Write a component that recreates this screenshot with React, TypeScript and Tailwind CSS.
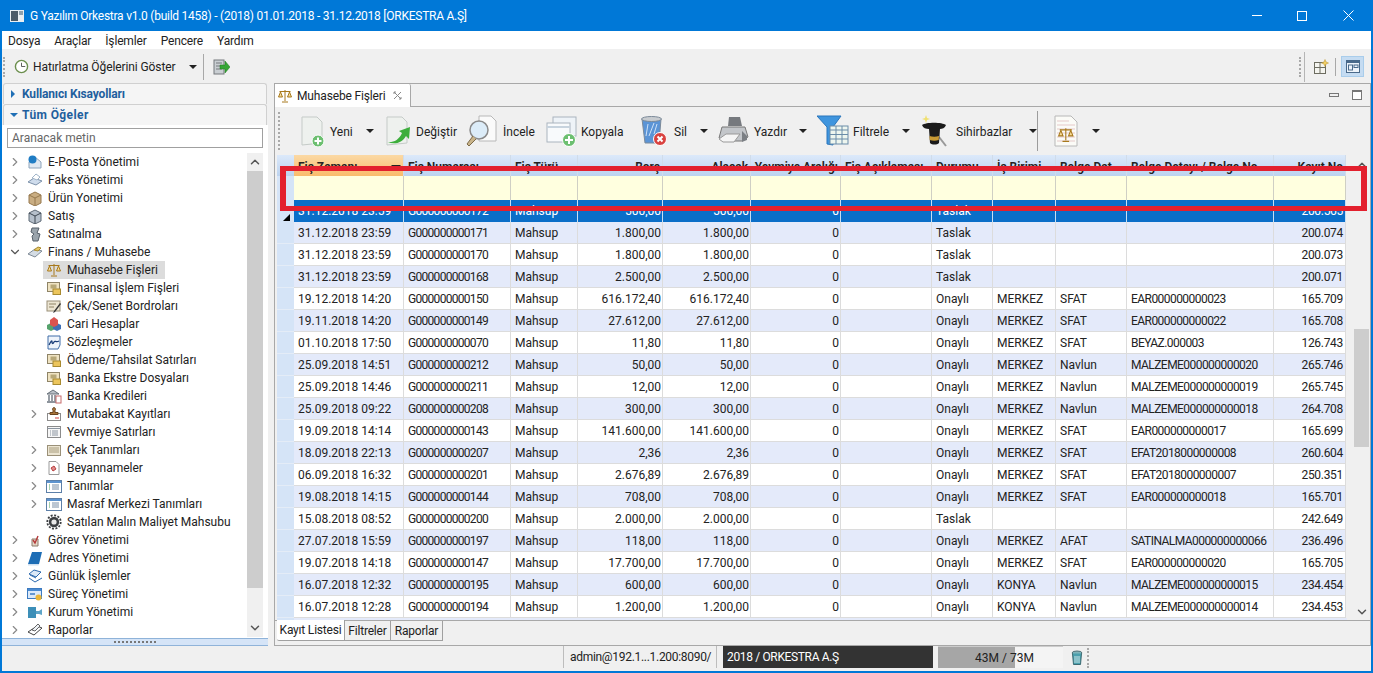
import { ChevronDown, ChevronRight, ChevronUp } from "lucide-react";

const COLS = "grid grid-cols-[110px_107px_67px_85px_88px_90px_91px_61px_63px_71px_147px_72px]";

const HEADERS: [string, boolean][] = [
  ["Fiş Zamanı", false],
  ["Fiş Numarası", false],
  ["Fiş Türü", false],
  ["Borç", true],
  ["Alacak", true],
  ["Yevmiye Aralığı", true],
  ["Fiş Açıklaması", false],
  ["Durumu", false],
  ["İş Birimi", false],
  ["Belge Dat", false],
  ["Belge Detayı / Belge No", false],
  ["Kayıt No", true],
];

const ROWS: string[][] = [
  ["31.12.2018 23:59", "G000000000171", "1.800,00", "Taslak", "", "", "", "200.074"],
  ["31.12.2018 23:59", "G000000000170", "1.800,00", "Taslak", "", "", "", "200.073"],
  ["31.12.2018 23:59", "G000000000168", "2.500,00", "Taslak", "", "", "", "200.071"],
  ["19.12.2018 14:20", "G000000000150", "616.172,40", "Onaylı", "MERKEZ", "SFAT", "EAR000000000023", "165.709"],
  ["19.11.2018 14:20", "G000000000149", "27.612,00", "Onaylı", "MERKEZ", "SFAT", "EAR000000000022", "165.708"],
  ["01.10.2018 17:50", "G000000000070", "11,80", "Onaylı", "MERKEZ", "SFAT", "BEYAZ.000003", "126.743"],
  ["25.09.2018 14:51", "G000000000212", "50,00", "Onaylı", "MERKEZ", "Navlun", "MALZEME000000000020", "265.746"],
  ["25.09.2018 14:46", "G000000000211", "12,00", "Onaylı", "MERKEZ", "Navlun", "MALZEME000000000019", "265.745"],
  ["25.09.2018 09:22", "G000000000208", "300,00", "Onaylı", "MERKEZ", "Navlun", "MALZEME000000000018", "264.708"],
  ["19.09.2018 14:14", "G000000000143", "141.600,00", "Onaylı", "MERKEZ", "SFAT", "EAR000000000017", "165.699"],
  ["18.09.2018 22:13", "G000000000207", "2,36", "Onaylı", "MERKEZ", "SFAT", "EFAT2018000000008", "260.604"],
  ["06.09.2018 16:32", "G000000000201", "2.676,89", "Onaylı", "MERKEZ", "SFAT", "EFAT2018000000007", "250.351"],
  ["19.08.2018 14:15", "G000000000144", "708,00", "Onaylı", "MERKEZ", "SFAT", "EAR000000000018", "165.701"],
  ["15.08.2018 08:52", "G000000000200", "2.000,00", "Taslak", "", "", "", "242.649"],
  ["27.07.2018 15:59", "G000000000197", "118,00", "Onaylı", "MERKEZ", "AFAT", "SATINALMA000000000066", "236.496"],
  ["19.07.2018 14:18", "G000000000147", "17.700,00", "Onaylı", "MERKEZ", "SFAT", "EAR000000000020", "165.705"],
  ["16.07.2018 12:32", "G000000000195", "600,00", "Onaylı", "KONYA", "Navlun", "MALZEME000000000015", "234.454"],
  ["16.07.2018 12:28", "G000000000194", "1.200,00", "Onaylı", "KONYA", "Navlun", "MALZEME000000000014", "234.453"],
];

type TreeItem = { label: string; icon: string; level: 0 | 1; arrow?: "right" | "down"; active?: boolean };

const TREE: TreeItem[] = [
  { label: "E-Posta Yönetimi", icon: "mail", level: 0, arrow: "right" },
  { label: "Faks Yönetimi", icon: "fax", level: 0, arrow: "right" },
  { label: "Ürün Yonetimi", icon: "box", level: 0, arrow: "right" },
  { label: "Satış", icon: "sale", level: 0, arrow: "right" },
  { label: "Satınalma", icon: "buy", level: 0, arrow: "right" },
  { label: "Finans / Muhasebe", icon: "finance", level: 0, arrow: "down" },
  { label: "Muhasebe Fişleri", icon: "scale", level: 1, active: true },
  { label: "Finansal İşlem Fişleri", icon: "money", level: 1 },
  { label: "Çek/Senet Bordroları", icon: "cheque", level: 1 },
  { label: "Cari Hesaplar", icon: "cubes", level: 1 },
  { label: "Sözleşmeler", icon: "contract", level: 1 },
  { label: "Ödeme/Tahsilat Satırları", icon: "money", level: 1 },
  { label: "Banka Ekstre Dosyaları", icon: "moneydoc", level: 1 },
  { label: "Banka Kredileri", icon: "bank", level: 1 },
  { label: "Mutabakat Kayıtları", icon: "stamp", level: 1, arrow: "right" },
  { label: "Yevmiye Satırları", icon: "lines", level: 1 },
  { label: "Çek Tanımları", icon: "chequedef", level: 1, arrow: "right" },
  { label: "Beyannameler", icon: "decl", level: 1, arrow: "right" },
  { label: "Tanımlar", icon: "table", level: 1, arrow: "right" },
  { label: "Masraf Merkezi Tanımları", icon: "table", level: 1, arrow: "right" },
  { label: "Satılan Malın Maliyet Mahsubu", icon: "gear", level: 1 },
  { label: "Görev Yönetimi", icon: "task", level: 0, arrow: "right" },
  { label: "Adres Yönetimi", icon: "book", level: 0, arrow: "right" },
  { label: "Günlük İşlemler", icon: "daily", level: 0, arrow: "right" },
  { label: "Süreç Yönetimi", icon: "process", level: 0, arrow: "right" },
  { label: "Kurum Yönetimi", icon: "org", level: 0, arrow: "right" },
  { label: "Raporlar", icon: "report", level: 0, arrow: "right" },
];

function ScaleGlyph() {
  return (
    <g fill="none" stroke="#a8791c" strokeWidth="1">
      <path d="M8 2v11M2.500 3.500h11M5 14h6" />
      <path d="M3.500 4L1.500 9h4zM12.500 4l-2 5h4z" fill="#f6dc98" />
    </g>
  );
}

function TreeIcon({ name }: { name: string }) {
  const body = () => {
    switch (name) {
      case "mail":
        return (
          <>
            <path d="M2 8l6-5 6 5v6H2z" fill="#dfe8f2" stroke="#8fa5bb" />
            <circle cx="5.500" cy="5.500" r="4" fill="#1f7cc4" />
          </>
        );
      case "fax":
        return (
          <>
            <path d="M1 10l6-4 8 3-6 4z" fill="#cfdcec" stroke="#7e93ab" />
            <path d="M5 6l4-4 4 3-3 3z" fill="#fff" stroke="#9fb3c8" />
          </>
        );
      case "box":
        return (
          <>
            <path d="M2 5l6-3 6 3v8l-6 3-6-3z" fill="#c9ad82" stroke="#96794f" />
            <path d="M8 8v8M2 5l6 3 6-3" fill="none" stroke="#96794f" />
          </>
        );
      case "sale":
        return (
          <>
            <path d="M2 5l6-3 6 3v8l-6 3-6-3z" fill="#b6c0cb" stroke="#5f6a76" />
            <path d="M8 8v8M2 5l6 3 6-3" fill="none" stroke="#3d4650" />
          </>
        );
      case "buy":
        return <path d="M5 2h7l-2 5 3 1-2 7H6l-1-5 2-2-3-2z" fill="#9aa4ac" stroke="#56606a" />;
      case "finance":
        return (
          <>
            <path d="M1 10l7-5 7 2-7 6z" fill="#d4dce4" stroke="#7e8a96" />
            <path d="M7 6l4-3 3 1-3 3z" fill="#e6c766" stroke="#a88a30" />
          </>
        );
      case "scale":
        return <ScaleGlyph />;
      case "money":
      case "moneydoc":
        return (
          <>
            <rect x="1.500" y="2.500" width="12" height="9" fill="#efe3c2" stroke="#8f8467" />
            <rect x="4.500" y="4.500" width="6" height="4" fill="#b7a878" />
            <rect x="7" y="9" width="7.500" height="5.500" fill="#ecc55c" stroke="#a88a30" />
          </>
        );
      case "cheque":
        return (
          <>
            <rect x="1" y="3" width="13" height="10" fill="#ece5d2" stroke="#9a9078" />
            <path d="M3 6h7M3 9h5" stroke="#8f8467" />
            <path d="M15 6l-6 8-2 1 1-2 6-8z" fill="#333" />
          </>
        );
      case "cubes":
        return (
          <>
            <path d="M1 9l4-2 4 2v4l-4 2-4-2z" fill="#56a36c" />
            <path d="M7 9l4-2 4 2v4l-4 2-4-2z" fill="#3d6fb6" />
            <path d="M4 4l4-3 4 3v5l-4 2-4-2z" fill="#d9534f" />
          </>
        );
      case "contract":
        return (
          <>
            <path d="M2 2h12v9l-2 4H2z" fill="#eef4fb" stroke="#3e6da8" />
            <path d="M3 11c2-4 3-5 3-3s1 2 2 0 2 1 5-1" fill="none" stroke="#1b3f7a" strokeWidth="1.300" />
          </>
        );
      case "bank":
        return (
          <>
            <path d="M1 6l6-4 6 4z" fill="#b9bfc6" stroke="#666f78" />
            <path d="M3 7v6M6 7v6M9 7v6" stroke="#6d7680" strokeWidth="1.400" />
            <rect x="1" y="13" width="11" height="2" fill="#8d949c" />
            <rect x="10" y="8" width="5" height="7" fill="#fff" stroke="#c56a6a" />
          </>
        );
      case "stamp":
        return (
          <>
            <rect x="1.500" y="7.500" width="13" height="7" fill="#fff" stroke="#8b8b8b" />
            <path d="M8 1.500a1.800 1.800 0 011 3v2h3v2H4v-2h3v-2a1.800 1.800 0 011-3z" fill="#a9753a" stroke="#6b4520" />
            <path d="M9 12h4" stroke="#d04040" />
          </>
        );
      case "lines":
        return (
          <>
            <rect x="1.500" y="2.500" width="13" height="11" fill="#f7f7f7" stroke="#8b8b8b" />
            <path d="M1.500 4.500h13M4 7h1M6 7h6M4 9h1M6 9h6M4 11h1M6 11h6" stroke="#8a94a0" />
          </>
        );
      case "chequedef":
        return (
          <>
            <rect x="1.500" y="3.500" width="13" height="10" fill="#ece5d2" stroke="#9a9078" />
            <path d="M3 6h10M3 8h10M3 10h10" stroke="#a89d7e" />
          </>
        );
      case "decl":
        return (
          <>
            <path d="M3 1.500h7l3 3v10H3z" fill="#fff" stroke="#9a9a9a" />
            <path d="M5 8l3-2 2 3-3 2z" fill="#e08b8b" stroke="#b83f3f" />
          </>
        );
      case "table":
        return (
          <>
            <rect x="0.500" y="2.500" width="15" height="12" fill="#fff" stroke="#5c7fa8" />
            <rect x="1" y="3" width="14" height="2" fill="#5d93cf" />
            <path d="M3 7h1M3 9h1M3 11h1" stroke="#4fa35a" />
            <path d="M6 7h7M6 9h7M6 11h7" stroke="#7b8ea6" />
          </>
        );
      case "gear":
        return (
          <>
            <circle cx="8" cy="8" r="5.200" fill="#3c3f42" />
            <circle cx="8" cy="8" r="6.700" fill="none" stroke="#3c3f42" strokeWidth="1.800" strokeDasharray="2 1.500" />
            <circle cx="8" cy="8" r="2.600" fill="#e9e9e9" />
          </>
        );
      case "task":
        return (
          <>
            <path d="M5 7h6v7H5z" fill="#e5d7c8" stroke="#8a7a6a" />
            <path d="M6 8l2 3 3-7" fill="none" stroke="#b5393a" strokeWidth="1.400" />
          </>
        );
      case "book":
        return (
          <>
            <path d="M5 2h10l-3 12H1z" fill="#1d6db5" />
            <path d="M1 14h11l-.5 1.500H1z" fill="#cfe0f0" />
          </>
        );
      case "daily":
        return (
          <>
            <path d="M2 6l5-4 7 2-5 5z" fill="#dbe8f6" stroke="#2c69ad" />
            <path d="M2 10l6 4 7-4M3 7l6 3" fill="none" stroke="#2c69ad" />
          </>
        );
      case "process":
        return (
          <>
            <rect x="0.500" y="2.500" width="14" height="10" fill="#dbe9f9" stroke="#3c7ac0" />
            <rect x="1" y="3" width="13" height="2" fill="#4a8ad0" />
            <path d="M3 8h5" stroke="#3c7ac0" strokeWidth="1.500" />
            <circle cx="11.500" cy="11.500" r="3" fill="#eab638" />
          </>
        );
      case "org":
        return (
          <>
            <rect x="1" y="3" width="8" height="11" fill="#3d8fb8" />
            <path d="M9 7h3l3-2v6l-3-1H9z" fill="#5ea5c8" />
          </>
        );
      default:
        return (
          <>
            <path d="M1 10l9-6 5 2-8 7z" fill="#fff" stroke="#444" />
            <path d="M5 8l6-6 2 2-5 5z" fill="#eef2f6" stroke="#666" />
          </>
        );
    }
  };
  return (
    <svg viewBox="0 0 16 16" className="h-4 w-4 shrink-0">
      {body()}
    </svg>
  );
}

function TreeRow({ item }: { item: TreeItem }) {
  return (
    <div className={`flex h-[18px] items-center ${item.level === 0 ? "pl-[4px]" : "pl-[23px]"}`}>
      <span className="flex w-[18px] shrink-0 items-center justify-center text-[#8a8a8a]">
        {item.arrow === "right" && <ChevronRight size={14} strokeWidth={2} />}
        {item.arrow === "down" && <ChevronDown size={14} strokeWidth={2} className="text-[#555]" />}
      </span>
      <span className={`flex h-[18px] items-center pl-[3px] ${item.active ? "bg-[#dcdcdc] pr-[7px]" : ""}`}>
        <TreeIcon name={item.icon} />
        <span className="ml-[5px] whitespace-nowrap text-[#222]">{item.label}</span>
      </span>
    </div>
  );
}

function DocBase({ children }: { children: React.ReactNode }) {
  return (
    <svg viewBox="0 0 32 32" className="h-8 w-8 shrink-0">
      <path d="M6 2h15l5 5v21l-20 2z" fill="#eef1ee" stroke="#c5cbc8" />
      {children}
    </svg>
  );
}

function TbIcon({ name }: { name: string }) {
  switch (name) {
    case "new":
      return (
        <DocBase>
          <circle cx="22" cy="26" r="6" fill="#6cbf70" stroke="#fff" />
          <path d="M22 22.500v7M18.500 26h7" stroke="#fff" strokeWidth="2" />
        </DocBase>
      );
    case "edit":
      return (
        <DocBase>
          <path d="M6 27c6 1 12-2 15-9l-3-2 11-4-1 12-3-3c-4 7-11 9-19 6z" fill="#3cae3c" />
        </DocBase>
      );
    case "view":
      return (
        <svg viewBox="0 0 32 32" className="h-8 w-8 shrink-0">
          <path d="M13 1h12l5 5v20H13z" fill="#fafafa" stroke="#b8b8b8" />
          <circle cx="13" cy="15" r="9" fill="#dcecf8" stroke="#8a8a8a" strokeWidth="1.500" />
          <path d="M7 21L1 29l2 2 7-7" fill="#c9b48a" stroke="#7c6a48" />
        </svg>
      );
    case "copy":
      return (
        <svg viewBox="0 0 32 32" className="h-8 w-8 shrink-0">
          <rect x="8" y="2" width="23" height="19" fill="#eef3f8" stroke="#aab4be" />
          <rect x="2" y="8" width="23" height="19" fill="#f8fafc" stroke="#aab4be" />
          <path d="M2 12h23" stroke="#c7d3de" strokeWidth="2" />
          <circle cx="24" cy="25" r="6.500" fill="#6cbf70" stroke="#fff" />
          <path d="M24 21v8M20 25h8" stroke="#fff" strokeWidth="2" />
        </svg>
      );
    case "trash":
      return (
        <svg viewBox="0 0 32 32" className="h-8 w-8 shrink-0">
          <path d="M5 4h19l-2 24H8z" fill="#5b94d6" stroke="#7c8a99" />
          <ellipse cx="14.500" cy="4" rx="10" ry="2.500" fill="#c8ccd0" stroke="#7c8a99" />
          <path d="M11 9l-2 12M17 8l-5 13M20 9l-3 10" stroke="#cfe2f7" />
          <circle cx="23" cy="24" r="6.500" fill="#d9423f" stroke="#fff" />
          <path d="M20.500 21.500l5 5M25.500 21.500l-5 5" stroke="#fff" strokeWidth="2" />
        </svg>
      );
    case "print":
      return (
        <svg viewBox="0 0 32 32" className="h-8 w-8 shrink-0">
          <path d="M11 2h11l2 9H10z" fill="#76797e" />
          <path d="M4 12h23l3 10-6 4H8l-7-3z" fill="#c3c6ca" stroke="#777" />
          <path d="M1 24l7-5h14l-6 8H5z" fill="#f5f5f5" stroke="#999" />
          <path d="M24 16l5 5v4l-5 2z" fill="#7b7f84" />
        </svg>
      );
    case "funnel":
      return (
        <svg viewBox="0 0 32 32" className="h-8 w-8 shrink-0">
          <path d="M0 1h24l-8 11v18l-6-1V12z" fill="#3f95de" stroke="#2a76bc" />
          <rect x="13" y="11" width="18" height="18" fill="#eef6ef" stroke="#6a8ca8" />
          <path d="M13 15h18M13 19.500h18M13 24h18M19 11v18M25 11v18" stroke="#6a8ca8" />
        </svg>
      );
    case "hat":
      return (
        <svg viewBox="0 0 32 32" className="h-8 w-8 shrink-0">
          <path d="M20 22l7 9" stroke="#999" strokeWidth="2" />
          <path d="M3 10c4-3 20-3 24 0-1 3-4 4-6 4l-1 14c-2 2-7 2-9 0L10 14c-3 0-6-1-7-4z" fill="#1b1b1b" />
          <path d="M10.500 21c3 1 6.500 1 9.500 0l-.3 4c-3 1-6 1-9 0z" fill="#c89a34" />
          <path d="M7 0l1 3 3 1-3 1-1 3-1-3-3-1 3-1z" fill="#f0e070" />
        </svg>
      );
    default:
      return (
        <svg viewBox="0 0 32 32" className="h-8 w-8 shrink-0">
          <path d="M5 1h16l6 6v24H5z" fill="#fbfbf7" stroke="#b8b8b8" />
          <path d="M7 6h12M7 10h18M7 14h18M7 18h18M7 22h18M7 26h18" stroke="#e5c9c9" />
          <g transform="translate(7 11) scale(1.100)">
            <ScaleGlyph />
          </g>
        </svg>
      );
  }
}

function Caret({ className = "" }: { className?: string }) {
  return <span className={`h-0 w-0 border-x-[4px] border-t-[4px] border-x-transparent border-t-[#222] ${className}`} />;
}

function TbButton({ icon, label, caret, gap, caretGap, width }: { icon: string; label: string; caret?: boolean; gap: string; caretGap?: string; width: string }) {
  return (
    <div className={`flex shrink-0 items-center ${width}`}>
      <TbIcon name={icon} />
      <span className={`whitespace-nowrap pt-[2px] ${gap}`}>{label}</span>
      {caret && <Caret className={caretGap} />}
    </div>
  );
}

function Grip({ className = "" }: { className?: string }) {
  return <span className={`w-[2px] border-l-2 border-dotted border-[#a9a9a9] ${className}`} />;
}

function cellTracking(i: number) {
  if (i === 1) return "tracking-[-0.7px]";
  if (i === 10) return "tracking-[-0.55px]";
  if (i === 11) return "tracking-[-0.3px] pr-[2px]";
  return "";
}

export default function App() {
  return (
    <div className="flex h-[673px] w-[1373px] flex-col overflow-hidden border-x-2 border-b-2 border-[#0078d7] bg-[#f0f0f0] font-['Roboto',sans-serif] text-[12px] leading-none text-[#222]">
      {/* Title bar */}
      <div className="-mx-[2px] flex h-[31px] shrink-0 items-center bg-[#0078d7] pl-[10px] text-white">
        <svg viewBox="0 0 14 12" className="h-3 w-[14px]">
          <rect width="14" height="12" fill="#e9eef2" />
          <rect x="1" y="1" width="7" height="10" fill="#4a5a68" />
          <rect x="9" y="1" width="4" height="4" fill="#8fa0ad" />
        </svg>
        <span className="ml-[6px] text-[12px] tracking-[-0.25px]">
          G Yazılım Orkestra v1.0 (build 1458) - (2018) 01.01.2018 - 31.12.2018 [ORKESTRA A.Ş]
        </span>
        <div className="ml-auto flex items-center pr-[19px]">
          <span className="h-px w-[10px] bg-white" />
          <span className="ml-[35px] h-[10px] w-[10px] border border-white" />
          <svg viewBox="0 0 11 11" className="ml-[36px] h-[11px] w-[11px]" stroke="#fff" fill="none">
            <path d="M.5.500l10 10M10.500.500l-10 10" />
          </svg>
        </div>
      </div>

      {/* Menu */}
      <div className="flex h-[18px] shrink-0 items-center gap-[14px] bg-white pl-[6px] pt-[2px] tracking-[-0.15px]">
        {["Dosya", "Araçlar", "İşlemler", "Pencere", "Yardım"].map((m) => (
          <span key={m}>{m}</span>
        ))}
      </div>

      {/* Main toolbar */}
      <div className="flex h-[34px] shrink-0 items-center pl-[1px] pt-[1px]">
        <Grip className="h-[20px]" />
        <svg viewBox="0 0 16 16" className="ml-[9px] h-[15px] w-[15px]">
          <circle cx="8" cy="8" r="6.500" fill="#fff" stroke="#6c8f4e" strokeWidth="1.500" />
          <path d="M8 4v4h4" fill="none" stroke="#555" />
        </svg>
        <span className="ml-[4px] whitespace-nowrap tracking-[-0.1px]">Hatırlatma Öğelerini Göster</span>
        <Caret className="ml-[14px]" />
        <span className="ml-[6px] h-[26px] w-px bg-[#a8a8a8]" />
        <svg viewBox="0 0 18 18" className="ml-[8px] h-[18px] w-[18px]">
          <rect x="2" y="2" width="10" height="14" fill="#c9ced2" stroke="#75797d" />
          <path d="M4 5h6M4 8h6M4 11h6" stroke="#75797d" />
          <path d="M8 7h5V3l5 6-5 6v-4H8z" fill="#36a636" stroke="#1e7a1e" strokeWidth=".5" />
        </svg>
        <div className="ml-auto flex items-center pr-[7px]">
          <Grip className="h-[20px]" />
          <span className="ml-[3px] h-[30px] w-px bg-[#b5b5b5]" />
          <svg viewBox="0 0 16 16" className="ml-[8px] h-[16px] w-[16px]">
            <rect x="1.500" y="3.500" width="11" height="11" fill="#f4f4ef" stroke="#6c6c60" />
            <path d="M1.500 8.500h11M7 3.500v11" stroke="#6c6c60" />
            <path d="M12 .5l1 2.500 2.500 1-2.500 1-1 2.500-1-2.500-2.500-1 2.500-1z" fill="#f2cf62" stroke="#b68e28" strokeWidth=".5" />
          </svg>
          <span className="ml-[6px] h-[18px] w-px bg-[#a8a8a8]" />
          <span className="ml-[5px] flex h-[21px] w-[23px] items-center justify-center border border-[#a9cdeb] bg-[#c5dcf2]">
            <svg viewBox="0 0 14 13" className="h-[13px] w-[14px]">
              <rect x=".5" y=".5" width="13" height="12" fill="#eef4fa" stroke="#4a6a8a" />
              <rect x="1" y="1" width="12" height="2" fill="#4a6a8a" />
              <rect x="2.500" y="5" width="4" height="5" fill="none" stroke="#4a6a8a" />
              <rect x="8" y="5" width="4" height="2.500" fill="none" stroke="#4a6a8a" />
            </svg>
          </span>
        </div>
      </div>

      {/* Work area */}
      <div className="flex min-h-0 flex-1">
        {/* Left navigator */}
        <div className="flex w-[266px] shrink-0 flex-col">
          <div className="mx-[1px] flex h-[21px] shrink-0 items-center rounded-t-[3px] border border-b-0 border-[#d0d0d0] bg-[#f5f5f5] pl-[7px] font-bold text-[#1f5f9e]">
            <span className="h-0 w-0 border-y-[4px] border-l-[4px] border-y-transparent border-l-[#1f6fb5]" />
            <span className="ml-[7px] tracking-[-0.15px]">Kullanıcı Kısayolları</span>
          </div>
          <div className="mx-[1px] flex h-[21px] shrink-0 items-center rounded-t-[3px] border border-b-0 border-[#d0d0d0] bg-[#f5f5f5] pl-[6px] font-bold text-[#1f5f9e]">
            <span className="h-0 w-0 border-x-[4px] border-t-[4px] border-x-transparent border-t-[#1f6fb5]" />
            <span className="ml-[4px] tracking-[0.4px]">Tüm Öğeler</span>
          </div>
          <div className="flex min-h-0 flex-1 flex-col bg-white">
            <div className="mx-[5px] mt-[3px] flex h-[20px] shrink-0 items-center border border-[#a0a0a0] bg-white pl-[4px] text-[#666]">
              Aranacak metin
            </div>
            <div className="mt-[5px] flex min-h-0 flex-1 pr-[5px]">
              <div className="min-w-0 flex-1 overflow-hidden">
                {TREE.map((t) => (
                  <TreeRow key={t.label} item={t} />
                ))}
              </div>
              <div className="mb-[1px] flex w-[16px] shrink-0 flex-col items-center bg-[#f0f0f0]">
                <ChevronUp size={14} strokeWidth={2.500} className="mt-[2px] h-[14px] shrink-0 text-[#555]" />
                <div className="mt-[2px] h-[417px] w-full bg-[#cdcdcd]" />
                <ChevronDown size={14} strokeWidth={2.500} className="mt-auto mb-[2px] text-[#555]" />
              </div>
            </div>
          </div>
          <div className="flex h-[8px] shrink-0 items-center justify-center border-y border-[#8fb3d9] bg-[#d5e4f7]">
            <span className="w-[42px] border-t-2 border-dotted border-[#777]" />
          </div>
        </div>

        {/* Right panel */}
        <div className="ml-[6px] flex min-w-0 flex-1 flex-col">
          <div className="flex min-h-0 flex-1 flex-col border border-[#a8a8a8] bg-[#f0f0f0]">
            {/* Tab strip */}
            <div className="flex h-[23px] shrink-0 items-stretch border-b border-[#a8a8a8]">
              <div className="-mb-px flex w-[136px] items-center rounded-tr-[2px] border-r border-[#a8a8a8] bg-white pl-[2px]">
                <svg viewBox="0 0 16 16" className="h-4 w-4">
                  <ScaleGlyph />
                </svg>
                <span className="ml-[4px] tracking-[-0.15px]">Muhasebe Fişleri</span>
                <svg viewBox="0 0 9 9" className="ml-[8px] h-[9px] w-[9px]" fill="none" stroke="#8a8a8a">
                  <path d="M1 1l7 7M8 1L1 8M1 1h2M1 1v2M8 8H6M8 8V6" />
                </svg>
              </div>
              <div className="ml-auto flex items-center gap-[13px] pr-[8px]">
                <span className="h-[4px] w-[10px] border border-[#777]" />
                <span className="h-[10px] w-[10px] border border-t-2 border-[#777] bg-white" />
              </div>
            </div>

            {/* Action toolbar */}
            <div className="flex h-[48px] shrink-0 items-center pl-[3px]">
              <Grip className="h-[38px]" />
              <div className="ml-[16px] flex items-center">
                <TbButton icon="new" label="Yeni" caret gap="ml-[2px]" caretGap="ml-[13px]" width="w-[85px]" />
                <TbButton icon="edit" label="Değiştir" gap="ml-[3px]" width="w-[85px]" />
                <TbButton icon="view" label="İncele" gap="ml-[5px]" width="w-[79px]" />
                <TbButton icon="copy" label="Kopyala" gap="ml-[4px]" width="w-[92px]" />
                <TbButton icon="trash" label="Sil" caret gap="ml-[5px]" caretGap="ml-[13px]" width="w-[81px]" />
                <TbButton icon="print" label="Yazdır" caret gap="ml-[4px]" caretGap="ml-[12px]" width="w-[99px]" />
                <TbButton icon="funnel" label="Filtrele" caret gap="ml-[4px]" caretGap="ml-[13px]" width="w-[102px]" />
                <TbButton icon="hat" label="Sihirbazlar" caret gap="ml-[5px]" caretGap="ml-[17px]" width="w-[118px]" />
              </div>
              <span className="h-[40px] w-px bg-[#9c9c9c]" />
              <div className="ml-[12px] flex items-center">
                <TbIcon name="doc" />
                <Caret className="ml-[10px]" />
              </div>
            </div>

            {/* Table */}
            <div className="flex min-h-0 flex-1 pl-[2px] pr-px">
              <div className="min-w-0 flex-1 overflow-hidden">
                {/* Column headers */}
                <div className="flex h-[21px]">
                  <div className="w-[17px] shrink-0 bg-gradient-to-b from-[#dce9fa] to-[#bcd3ef]" />
                  <div className={`${COLS} flex-1`}>
                    {HEADERS.map(([h, right], i) => (
                      <div
                        key={h}
                        className={`flex items-center overflow-hidden whitespace-nowrap border-r border-[#d0dcea] pt-[3px] font-semibold ${right ? "justify-end pr-[2px]" : "pl-[4px]"} ${i === 0 ? "justify-between bg-gradient-to-b from-[#fbd9a4] to-[#f9bb6b] pr-[2px]" : "bg-gradient-to-b from-[#dce9fa] to-[#bcd3ef]"}`}
                      >
                        {h}
                        {i === 0 && <Caret className="border-x-[5px] border-t-[5px]" />}
                      </div>
                    ))}
                  </div>
                </div>
                {/* Filter row */}
                <div className="flex h-[24px]">
                  <div className="w-[17px] shrink-0 bg-[#d5e4f7]" />
                  <div className={`${COLS} flex-1`}>
                    {HEADERS.map(([h]) => (
                      <div key={h} className="border-r border-[#cfcfc4] bg-[#ffffdf]" />
                    ))}
                  </div>
                </div>
                {/* Selected row */}
                <div className="flex h-[22px]">
                  <div className="flex w-[17px] shrink-0 items-end justify-start bg-[#d5e4f7] pb-[1px] pl-[6px]">
                    <span className="h-0 w-0 border-b-[7px] border-l-[7px] border-b-black border-l-transparent" />
                  </div>
                  <div className={`${COLS} flex-1 text-white`}>
                    {["31.12.2018 23:59", "G000000000172", "Mahsup", "500,00", "500,00", "0", "", "Taslak", "", "", "", "200.565"].map((v, i) => (
                      <div
                        key={i}
                        className={`flex items-center whitespace-nowrap border-r border-[#c8dff4] bg-[#0a6ec8] ${cellTracking(i)} ${i === 3 || i === 4 || i === 5 ? "justify-end pr-[1px]" : i === 11 ? "justify-end" : "pl-[4px]"}`}
                      >
                        {v}
                      </div>
                    ))}
                  </div>
                </div>
                {/* Data rows */}
                {ROWS.map((r, n) => {
                  const cells = [r[0], r[1], "Mahsup", r[2], r[2], "0", "", r[3], r[4], r[5], r[6], r[7]];
                  const tint = n % 2 === 0;
                  return (
                    <div key={r[1]} className="flex h-[22px]">
                      <div className="w-[17px] shrink-0 border-b border-[#e4ecf7] bg-[#d5e4f7]" />
                      <div className={`${COLS} flex-1`}>
                        {cells.map((v, i) => (
                          <div
                            key={i}
                            className={`flex items-center overflow-hidden whitespace-nowrap border-r border-b border-[#dcdcdc] ${tint ? "bg-[#e4eafa]" : "bg-white"} ${cellTracking(i)} ${i === 3 || i === 4 || i === 5 ? "justify-end pr-[1px]" : i === 11 ? "justify-end" : "pl-[4px]"}`}
                          >
                            {v}
                          </div>
                        ))}
                      </div>
                    </div>
                  );
                })}
                <div className="flex h-[8px]">
                  <div className="w-[17px] shrink-0 bg-[#d5e4f7]" />
                  <div className="flex-1 bg-[#e4eafa]" />
                </div>
              </div>
              {/* Table scrollbar */}
              <div className="ml-[7px] flex w-[15px] shrink-0 flex-col items-center bg-[#f0f0f0]">
                <ChevronUp size={14} strokeWidth={2.500} className="mt-[3px] shrink-0 text-[#555]" />
                <div className="mt-[157px] h-[118px] w-full shrink-0 bg-[#cdcdcd]" />
                <ChevronDown size={14} strokeWidth={2.500} className="mt-auto mb-[1px] text-[#555]" />
              </div>
            </div>

            {/* Bottom tabs */}
            <div className="mb-[4px] flex h-[21px] shrink-0 items-stretch border-t border-[#a8a8a8] pl-[2px] tracking-[-0.2px]">
              <div className="-mt-px flex w-[68px] items-center justify-center rounded-bl-[2px] border-r border-b border-[#a0a0a0] bg-white">Kayıt Listesi</div>
              <div className="flex w-[46px] items-center justify-center border-r border-b border-[#a0a0a0]">Filtreler</div>
              <div className="flex w-[52px] items-center justify-center border-r border-b border-[#a0a0a0]">Raporlar</div>
            </div>
          </div>
        </div>
      </div>

      {/* Status bar */}
      <div className="flex h-[25px] shrink-0 items-start pl-[561px]">
        <span className="h-[22px] w-px bg-[#bdbdbd]" />
        <span className="ml-[6px] flex h-[22px] w-[146px] items-center whitespace-nowrap tracking-[-0.3px]">admin@192.1...1.200:8090/</span>
        <span className="h-[22px] w-px bg-[#bdbdbd]" />
        <span className="ml-[6px] flex h-[22px] w-[210px] items-center bg-[#333] pl-[4px] tracking-[-0.35px] text-white">2018 / ORKESTRA A.Ş</span>
        <div className="ml-[5px] flex h-[22px] w-[125px] items-center justify-center border-t border-[#ccc] bg-[linear-gradient(to_right,#a6a6a6_62%,#f4f4f4_62%)] pl-[8px]">
          43M / 73M
        </div>
        <svg viewBox="0 0 12 16" className="ml-[8px] mt-[4px] h-4 w-3">
          <ellipse cx="6" cy="3" rx="5" ry="2" fill="#7fb4ba" stroke="#4f6f75" />
          <path d="M1.500 3.500l1 11h7l1-11" fill="#4aa0ad" stroke="#3d6a72" />
          <path d="M4 6v7M6 6v7M8 6v7" stroke="#cde5e8" />
        </svg>
        <Grip className="ml-[4px] mt-[2px] h-[20px]" />
      </div>

      {/* Red annotation frame drawn over the table */}
      <div className="pointer-events-none absolute left-[280px] top-[166px] h-[45px] w-[1087px] border-x-[6px] border-y-[5px] border-[#e3202e]" />
    </div>
  );
}
